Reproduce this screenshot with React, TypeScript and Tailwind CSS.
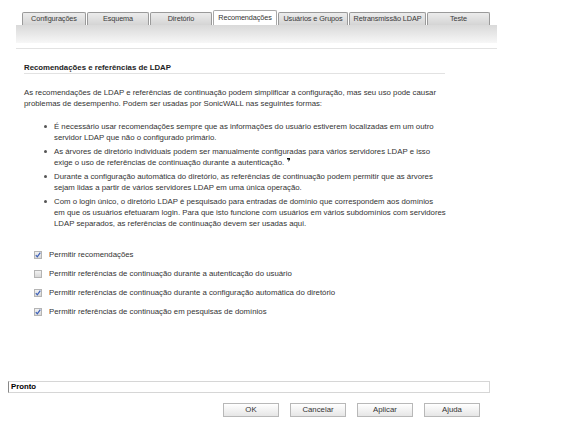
import React from 'react';

const tabs = [
  { label: 'Configurações', w: 'w-[64px]' },
  { label: 'Esquema', w: 'w-[62px]' },
  { label: 'Diretório', w: 'w-[62px]' },
  { label: 'Recomendações', w: 'w-[64px]', active: true },
  { label: 'Usuários e Grupos', w: 'w-[70px]' },
  { label: 'Retransmissão LDAP', w: 'w-[77px]' },
  { label: 'Teste', w: 'w-[63px]' },
];

const bullets: React.ReactNode[] = [
  <>É necessário usar recomendações sempre que as informações do usuário estiverem localizadas em um outro<br />servidor LDAP que não o configurado primário.</>,
  <>As árvores de diretório individuais podem ser manualmente configuradas para vários servidores LDAP e isso<br />exige o uso de referências de continuação durante a autenticação.<svg className="inline-block ml-[3px] align-top mt-[1px]" width="3" height="4" viewBox="0 0 3 4"><path d="M0 0h3v1.5L1.5 4V1.5H0z" fill="#111" /></svg></>,
  <>Durante a configuração automática do diretório, as referências de continuação podem permitir que as árvores<br />sejam lidas a partir de vários servidores LDAP em uma única operação.</>,
  <>Com o login único, o diretório LDAP é pesquisado para entradas de domínio que correspondem aos domínios<br />em que os usuários efetuaram login. Para que isto funcione com usuários em vários subdomínios com servidores<br />LDAP separados, as referências de continuação devem ser usadas aqui.</>,
];

const options = [
  { label: 'Permitir recomendações', checked: true },
  { label: 'Permitir referências de continuação durante a autenticação do usuário', checked: false },
  { label: 'Permitir referências de continuação durante a configuração automática do diretório', checked: true },
  { label: 'Permitir referências de continuação em pesquisas de domínios', checked: true },
];

function Checkbox({ checked }: { checked: boolean }) {
  return (
    <span className="w-[8px] h-[8px] border border-[#b4b4b4] bg-gradient-to-b from-[#f2f2f2] to-[#d8d8d8] flex items-center justify-center">
      {checked && (
        <svg width="6" height="6" viewBox="0 0 6 6">
          <path d="M0.8 3.2 L2.3 4.8 L5.3 0.6" stroke="#3b5fb8" strokeWidth="1.2" fill="none" />
        </svg>
      )}
    </span>
  );
}

export default function App() {
  return (
    <div className="w-[576px] h-[437px] bg-white text-[#333] text-[7.8px] font-['Liberation_Sans',Arial,sans-serif] overflow-hidden">
      {/* Tabs */}
      <div className="flex items-end h-[25px] pl-[22px] gap-[1px]">
        {tabs.map(t => (
          <div
            key={t.label}
            className={`${t.w} flex items-center justify-center border border-b-0 rounded-t-[2px] whitespace-nowrap text-[7.3px] tracking-[-0.1px] ${
              t.active
                ? 'h-[15px] bg-white border-[#a8a8a8] text-[#333]'
                : 'h-[13px] bg-gradient-to-b from-[#ececec] to-[#d4d4d4] border-[#9a9a9a] text-[#3a3a3a]'
            }`}
          >
            {t.label}
          </div>
        ))}
      </div>
      <div className="ml-[16px] w-[481px] h-[18px] bg-gradient-to-b from-[#d9d9d9] to-[#f7f7f7]" />
      <div className="ml-[16px] w-[481px] mt-[5px] h-px bg-[#e2e2e2]" />

      {/* Content */}
      <div className="pl-[24px] pt-[14px]">
        <div className="w-[421px] h-[11px] leading-[10px] font-bold text-[#222] border-b border-[#e2e2e2]">
          Recomendações e referências de LDAP
        </div>
        <p className="mt-[13px] leading-[11px]">
          As recomendações de LDAP e referências de continuação podem simplificar a configuração, mas seu uso pode causar
          <br />
          problemas de desempenho. Podem ser usadas por SonicWALL nas seguintes formas:
        </p>
        <ul className="mt-[12px] flex flex-col gap-[3px]">
          {bullets.map((b, i) => (
            <li key={i} className="flex leading-[11px]">
              <span className="w-[3px] h-[3px] rounded-full bg-[#555] mt-[4px] ml-[20px] mr-[7px] shrink-0" />
              <span>{b}</span>
            </li>
          ))}
        </ul>
        <div className="mt-[16px] flex flex-col">
          {options.map(o => (
            <label key={o.label} className="h-[19px] flex items-center pl-[10px]">
              <Checkbox checked={o.checked} />
              <span className="ml-[7px]">{o.label}</span>
            </label>
          ))}
        </div>
      </div>

      {/* Status */}
      <div className="mt-[60px] ml-[8px] w-[482px] h-[12px] border border-[#d6d6d6] border-l-[#888] flex items-center pl-[2px] font-bold text-black">
        Pronto
      </div>
      <div className="mt-[10px] flex pl-[223px] gap-[11px]">
        {['OK', 'Cancelar', 'Aplicar', 'Ajuda'].map(b => (
          <button
            key={b}
            className="w-[56px] h-[14px] border border-[#b8b8b8] bg-gradient-to-b from-white to-[#e6e6e6] text-[#333] text-[7.8px] leading-none"
          >
            {b}
          </button>
        ))}
      </div>
    </div>
  );
}
